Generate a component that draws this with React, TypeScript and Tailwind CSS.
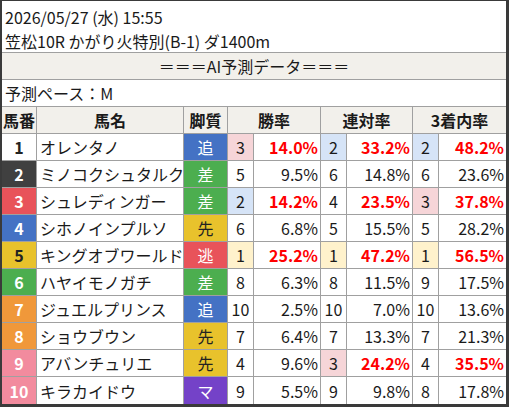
const waku: Record<number, string> = {
  1: "bg-white text-[#222]",
  2: "bg-[#404040] text-white",
  3: "bg-[#e8535a] text-white",
  4: "bg-[#4472c4] text-white",
  5: "bg-[#e8c22c] text-[#222]",
  6: "bg-[#4cae4f] text-white",
  7: "bg-[#f0983a] text-white",
  8: "bg-[#f0983a] text-white",
  9: "bg-[#f28b9e] text-white",
  10: "bg-[#f28b9e] text-white",
};

const style: Record<string, string> = {
  追: "bg-[#4472c4] text-white",
  差: "bg-[#4cae4f] text-white",
  先: "bg-[#e8c22c] text-[#222]",
  逃: "bg-[#e8535a] text-white",
  マ: "bg-[#7442c8] text-white",
};

const rankBg = (r: number) =>
  r === 1 ? "bg-[#fff2cc]" : r === 2 ? "bg-[#d6e4f7]" : r === 3 ? "bg-[#f6d5d8]" : "bg-white";

type Stat = [number, string, boolean];

const rows: { no: number; name: string; kyaku: string; stats: Stat[] }[] = [
  { no: 1, name: "オレンタノ", kyaku: "追", stats: [[3, "14.0%", true], [2, "33.2%", true], [2, "48.2%", true]] },
  { no: 2, name: "ミノコクシュタルク", kyaku: "差", stats: [[5, "9.5%", false], [6, "14.8%", false], [6, "23.6%", false]] },
  { no: 3, name: "シュレディンガー", kyaku: "差", stats: [[2, "14.2%", true], [4, "23.5%", true], [3, "37.8%", true]] },
  { no: 4, name: "シホノインプルソ", kyaku: "先", stats: [[6, "6.8%", false], [5, "15.5%", false], [5, "28.2%", false]] },
  { no: 5, name: "キングオブワールド", kyaku: "逃", stats: [[1, "25.2%", true], [1, "47.2%", true], [1, "56.5%", true]] },
  { no: 6, name: "ハヤイモノガチ", kyaku: "差", stats: [[8, "6.3%", false], [8, "11.5%", false], [9, "17.5%", false]] },
  { no: 7, name: "ジュエルプリンス", kyaku: "追", stats: [[10, "2.5%", false], [10, "7.0%", false], [10, "13.6%", false]] },
  { no: 8, name: "ショウブウン", kyaku: "先", stats: [[7, "6.4%", false], [7, "13.3%", false], [7, "21.3%", false]] },
  { no: 9, name: "アバンチュリエ", kyaku: "先", stats: [[4, "9.6%", false], [3, "24.2%", true], [4, "35.5%", true]] },
  { no: 10, name: "キラカイドウ", kyaku: "マ", stats: [[9, "5.5%", false], [9, "9.8%", false], [8, "17.8%", false]] },
];

const grid = "grid grid-cols-[35px_147px_44px_26px_67px_26px_66px_26px_67px]";
const line = "border-[#a0a0a0]";

export default function App() {
  return (
    <div
      className="w-[509px] h-[407px] bg-white border-[#3a3a3a] border-l-2 border-t border-r-[3px] border-b-[3px] text-[16px] text-[#1a1a1a] overflow-hidden"
      style={{ fontFamily: '"Noto Sans CJK JP", "Noto Sans", sans-serif' }}
    >
      <div className={`pt-[4px] pl-[3px] border-b ${line}`}>
        <div className="leading-[25px]">2026/05/27 (水) 15:55</div>
        <div className="leading-[22px]">笠松10R かがり火特別(B-1) ダ1400m</div>
      </div>
      <div className={`h-[27px] bg-[#f2f0eb] border-b ${line} flex items-center justify-center`}>
        ＝＝＝AI予測データ＝＝＝
      </div>
      <div className={`h-[27px] pl-[3px] border-b ${line} flex items-center`}>予測ペース：M</div>

      <div className={`${grid} h-[27px] bg-[#f2f0eb] font-bold border-b ${line}`}>
        <div className={`border-r ${line} flex items-center justify-center`}>馬番</div>
        <div className={`border-r ${line} flex items-center justify-center`}>馬名</div>
        <div className={`border-r ${line} flex items-center justify-center`}>脚質</div>
        <div className={`col-span-2 border-r ${line} flex items-center justify-center`}>勝率</div>
        <div className={`col-span-2 border-r ${line} flex items-center justify-center`}>連対率</div>
        <div className="col-span-2 flex items-center justify-center">3着内率</div>
      </div>

      {rows.map((r) => (
        <div key={r.no} className={`${grid} h-[27px] border-b ${line} last:border-b-0`}>
          <div className={`border-r ${line} flex items-center justify-center font-bold ${waku[r.no]}`}>{r.no}</div>
          <div className={`border-r ${line} flex items-center pl-[3px] whitespace-nowrap`}>{r.name}</div>
          <div className={`border-r ${line} flex items-center justify-center ${style[r.kyaku]}`}>{r.kyaku}</div>
          {r.stats.map(([rank, pct, hot], i) => (
            <div key={i} className="contents">
              <div className={`border-r ${line} flex items-center justify-center ${rankBg(rank)}`}>{rank}</div>
              <div
                className={`${i < 2 ? `border-r ${line}` : ""} flex items-center justify-end pr-[2px] ${
                  hot ? "text-[#ff0000] font-bold" : ""
                }`}
              >
                {pct}
              </div>
            </div>
          ))}
        </div>
      ))}
    </div>
  );
}
